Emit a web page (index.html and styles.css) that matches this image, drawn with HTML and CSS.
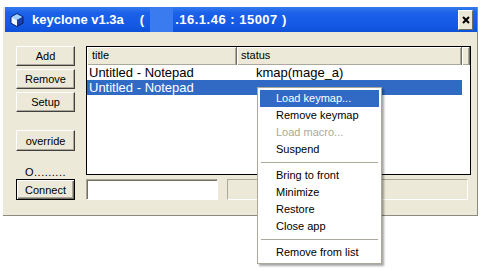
FILE: index.html
```html
<!DOCTYPE html>
<html lang="en">
<head>
	<meta charset="UTF-8">
	<title>keyclone v1.3a</title>
	<link rel="stylesheet" href="styles.css">
</head>
<body>
	<div class="win">
		<div class="titlebar">
			<svg class="appicon" viewBox="0 0 14 14">
				<polygon points="7,0.5 13,3.8 7,7 1,3.8" fill="#9fd2ff"/>
				<polygon points="1,3.8 7,7 7,13.5 1,10.2" fill="#eef8ff"/>
				<polygon points="13,3.8 13,10.2 7,13.5 7,7" fill="#1c3ea6"/>
				<polygon points="7,0.5 13,3.8 13,10.2 7,13.5 1,10.2 1,3.8" fill="none" stroke="#0b1f66" stroke-width="1"/>
			</svg>
			<span class="caption">keyclone v1.3a</span>
			<span class="paren">(</span>
			<span class="hidden-ip"></span>
			<span class="ip">.16.1.46 : 15007 )</span>
			<span class="close">
				<svg viewBox="0 0 8 8" width="8" height="8">
					<path d="M1 1L7 7M7 1L1 7" stroke="#000" stroke-width="2"/>
				</svg>
			</span>
		</div>
		<div class="client">
			<div class="side">
				<button class="btn">Add</button>
				<button class="btn">Remove</button>
				<button class="btn">Setup</button>
				<button class="btn override">override</button>
				<div class="olabel">O.........</div>
			</div>
			<div class="list">
				<div class="hdr">
					<span class="hcell col-title">title</span>
					<span class="hcell col-status">status</span>
					<span class="hcell col-rest"></span>
				</div>
				<div class="row">
					<span class="c1">Untitled - Notepad</span>
					<span class="c2">kmap(mage_a)</span>
				</div>
				<div class="row sel">
					<span class="c1">Untitled - Notepad</span>
					<span class="c2"></span>
				</div>
			</div>
			<button class="btn connect">Connect</button>
			<div class="bottomrow">
				<input class="field" type="text">
				<div class="statusbox"></div>
			</div>
		</div>
	</div>

	<div class="menu">
		<div class="item active">Load keymap...</div>
		<div class="item">Remove keymap</div>
		<div class="item disabled">Load macro...</div>
		<div class="item">Suspend</div>
		<div class="sep"></div>
		<div class="item">Bring to front</div>
		<div class="item">Minimize</div>
		<div class="item">Restore</div>
		<div class="item">Close app</div>
		<div class="sep"></div>
		<div class="item">Remove from list</div>
	</div>
</body>
</html>
```

FILE: styles.css
```css
*{box-sizing: border-box;}
body{margin: 0;width: 485px;height: 271px;overflow: hidden;position: relative;background: #fff;font-family: "Liberation Sans", Arial, sans-serif;color: #000;}

/* window */
.win{width: 475px;margin: 7px 0 0 3px;background: #ece9d8;border-right: 1px solid #8c8a7e;border-bottom: 1px solid #8c8a7e;}
.titlebar{height: 25px;margin-left: 2px;padding-left: 5px;display: flex;align-items: center;white-space: pre;color: #fff;font-size: 13px;font-weight: bold;background: linear-gradient(#347af0, #1a60e8 25%, #1359e4 75%, #0d51d9);}
.appicon{width: 14px;height: 14px;margin-right: 8px;}
.paren{margin-left: 16px;}
.hidden-ip{align-self: stretch;width: 23px;margin: 0 2px 0 6px;background: #3a7bf0;}
.ip{letter-spacing: .5px;}
.close{margin-left: auto;margin-right: 4px;width: 15px;height: 20px;display: flex;align-items: center;justify-content: center;background: #ece9d8;border: 1px solid;border-color: #fff #716f64 #716f64 #fff;}

/* client area */
.client{display: grid;grid-template-columns: 59px 385px;grid-template-rows: 129px 21px;column-gap: 11px;row-gap: 4px;padding: 14px 6px 15px 13px;}
.side{display: flex;flex-direction: column;gap: 3px;}
.btn{height: 20px;padding: 0;font: 11px "Liberation Sans", Arial, sans-serif;color: #000;background: #ece9d8;border: 1px solid;border-color: #fff #404040 #404040 #fff;box-shadow: inset -1px -1px #aca899;}
.override{height: 21px;margin-top: 15px;}
.olabel{margin-top: auto;margin-bottom: -3px;font-size: 11px;line-height: 12px;text-align: center;letter-spacing: .5px;}
.connect{height: 21px;border: 1px solid #000;box-shadow: inset 1px 1px #fff, inset -1px -1px #716f64, inset -2px -2px #aca899;}

/* list */
.list{background: #fff;border: 1px solid #000;overflow: hidden;}
.hdr{display: flex;height: 18px;font-size: 11px;line-height: 17px;background: #ece9d8;}
.hcell{border-right: 1px solid #716f64;box-shadow: inset 1px 1px #fff, inset 0 -1px #aca899, inset -1px 0 #aca899;}
.col-title{width: 150px;padding-left: 5px;}
.col-status{width: 225px;padding-left: 4px;}
.col-rest{flex: 1;}
.row{display: flex;width: 375px;height: 15px;line-height: 15px;font-size: 13px;white-space: nowrap;}
.row .c1{width: 150px;padding-left: 2px;}
.row .c2{padding-left: 19px;}
.row.sel{background: #316ac5;color: #fff;}

.bottomrow{display: flex;gap: 9px;padding-right: 3px;}
.field{width: 132px;height: 21px;margin: 0;background: #fff;border: 1px solid;border-color: #aca899 #fff #fff #aca899;box-shadow: inset 1px 1px #716f64;}
.statusbox{flex: 1;border: 1px solid;border-color: #aca899 #fff #fff #aca899;}

/* context menu */
.menu{position: absolute;left: 257px;top: 87px;width: 125px;padding: 2px;background: #fff;border: 1px solid #aca899;box-shadow: 2px 2px 2px rgba(0,0,0,.35);font-size: 11px;}
.item{height: 17px;line-height: 17px;padding-left: 16px;white-space: nowrap;}
.item.active{background: #316ac5;color: #fff;}
.item.disabled{color: #aca899;}
.sep{height: 9px;padding-top: 4px;margin: 0 1px;}
.sep::before{content: "";display: block;border-top: 1px solid #aca899;}
```
